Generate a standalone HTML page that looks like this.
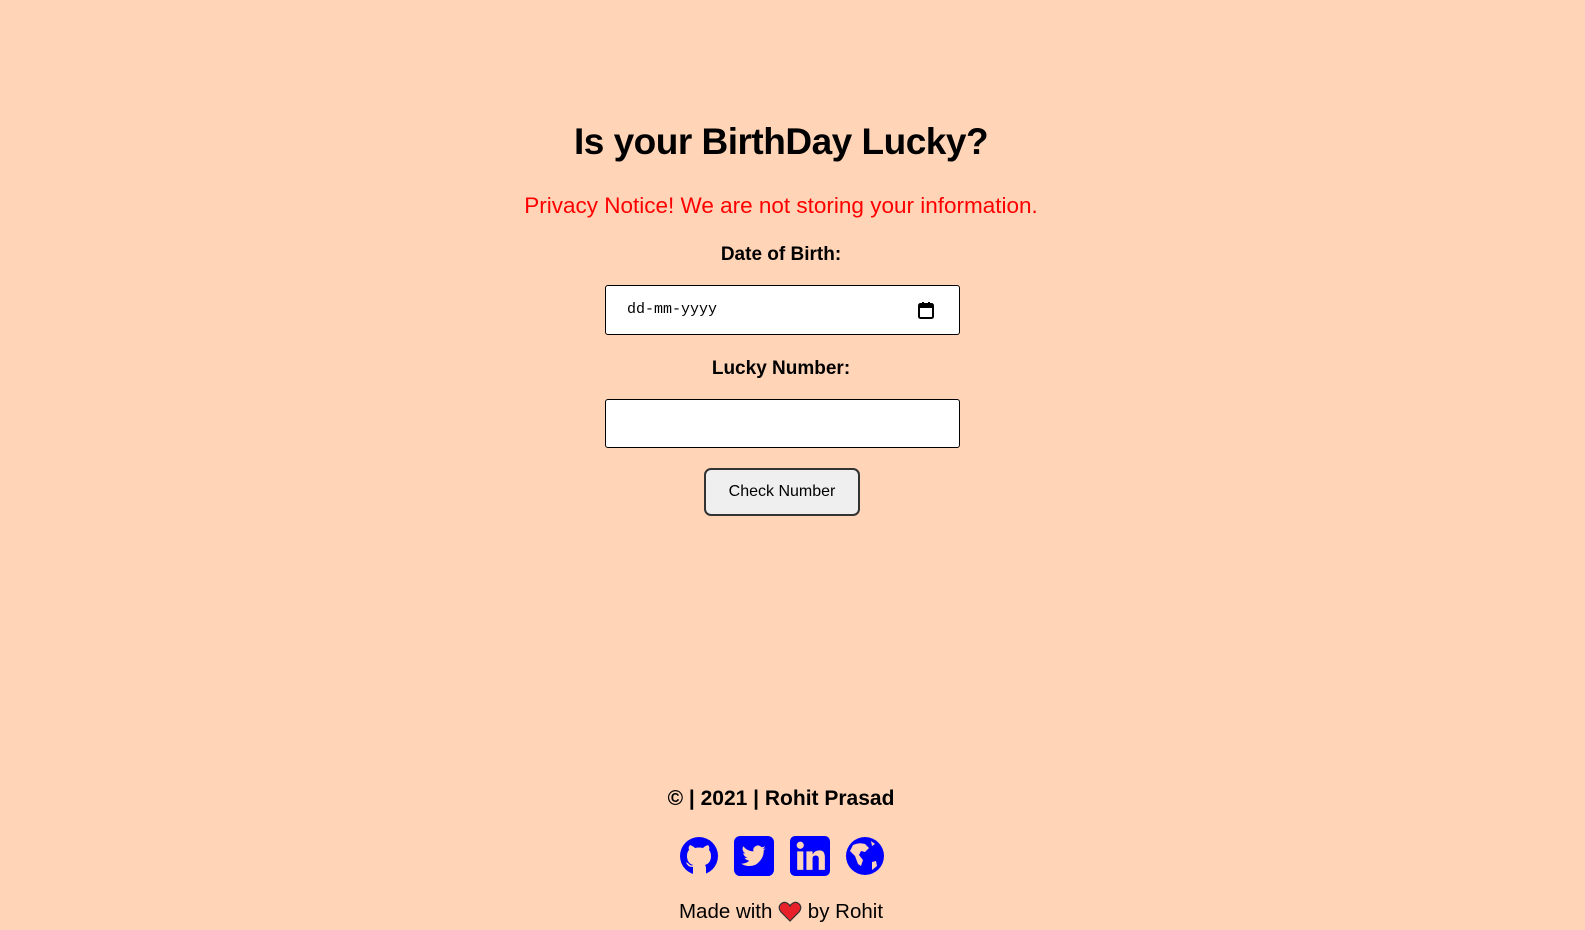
<!DOCTYPE html>
<html><head><style>
body{margin:0;background:#ffd4b7;font-family:"Liberation Sans",sans-serif;width:1585px;height:930px;position:relative;overflow:hidden;color:#000}
.c{position:absolute;left:0;width:1562px;text-align:center}
.box{position:absolute;left:605px;width:355px;background:#fff;border:1px solid #000;border-radius:3px;box-sizing:border-box}
</style></head><body>
<div class="c" style="top:121px;font-size:37px;font-weight:bold;letter-spacing:-0.5px">Is your BirthDay Lucky?</div>
<div class="c" style="top:193px;font-size:22.5px;color:#f00">Privacy Notice! We are not storing your information.</div>
<div class="c" style="top:244px;font-size:19px;font-weight:bold">Date of Birth:</div>
<div class="box" style="top:285px;height:50px">
<span style="position:absolute;left:21px;top:15px;font-family:'Liberation Mono',monospace;font-size:15px">dd-mm-yyyy</span>
<svg style="position:absolute;left:311px;top:15px" width="18" height="19" viewBox="0 0 18 19"><rect x="2" y="3" width="14" height="14" rx="1.5" fill="none" stroke="#000" stroke-width="2"/><rect x="2" y="3" width="14" height="4" fill="#000"/><rect x="5" y="1" width="2" height="3" fill="#000"/><rect x="11" y="1" width="2" height="3" fill="#000"/></svg>
</div>
<div class="c" style="top:358px;font-size:19px;font-weight:bold">Lucky Number:</div>
<div class="box" style="top:399px;height:49px"></div>
<div style="position:absolute;left:704px;top:468px;width:156px;height:48px;box-sizing:border-box;border:2px solid #333;border-radius:7px;background:#efefef;font-size:16px;text-align:center;line-height:44px">Check Number</div>
<div class="c" style="top:787px;font-size:21px;font-weight:bold">© | 2021 | Rohit Prasad</div>
<svg style="position:absolute;left:679px;top:836px" width="40" height="40" viewBox="0 0 40 40"><circle cx="20" cy="20" r="19" fill="#00f"/><path d="M14 39 V31 Q8 31 7 26 Q9 27 11 29 Q13 30 14 29 Q8 27 8 20 Q8 16 10 14 Q9 11 11 9 Q14 10 16 12 Q20 11 24 12 Q26 10 29 9 Q31 11 30 14 Q32 16 32 20 Q32 27 26 29 Q27 30 27 33 V39 Z" fill="#ffd4b7"/></svg>
<svg style="position:absolute;left:734px;top:836px" width="40" height="40" viewBox="0 0 39 39"><rect width="39" height="39" rx="6" fill="#00f"/><path d="M31 12 Q29 13 28 13 Q30 11 30 10 Q28 11 27 11 Q24 8 21 10 Q18 12 19 15 Q13 15 9 10 Q7 14 11 17 Q9 17 9 16 Q9 20 13 21 Q11 22 10 21 Q12 24 15 24 Q12 27 7 27 Q14 31 21 28 Q29 23 29 14 Q30 13 31 12Z" fill="#ffd4b7"/></svg>
<svg style="position:absolute;left:790px;top:836px" width="40" height="40" viewBox="0 0 39 39"><rect width="39" height="39" rx="5" fill="#00f"/><rect x="7" y="15" width="6" height="18" fill="#ffd4b7"/><circle cx="10" cy="9" r="3.5" fill="#ffd4b7"/><path d="M16 15h6v3q2-4 7-4q5 0 5 7v12h-6v-11q0-3-3-3t-3 3v11h-6z" fill="#ffd4b7"/></svg>
<svg style="position:absolute;left:845px;top:836px" width="40" height="40" viewBox="0 0 40 40"><circle cx="20" cy="20" r="19" fill="#00f"/><path d="M8 9 Q14 6 20 8 L24 12 L20 16 L16 15 L14 19 L18 24 L16 30 L13 28 L10 20 L5 15Z M27 26 L31 25 L32 30 L27 34Z M26 5 L30 8 L27 10Z" fill="#ffd4b7"/></svg>
<div class="c" style="top:900px;font-size:20.5px">Made with <svg width="24" height="22" viewBox="0 0 24 22" style="vertical-align:-4px"><path d="M12 21 L3 12 Q0 8 2 5 Q5 1 9 3 Q11 4 12 6 Q13 4 15 3 Q19 1 22 5 Q24 8 21 12Z" fill="#e8202a" stroke="#333" stroke-width="1.2"/></svg> by Rohit</div>
</body></html>
